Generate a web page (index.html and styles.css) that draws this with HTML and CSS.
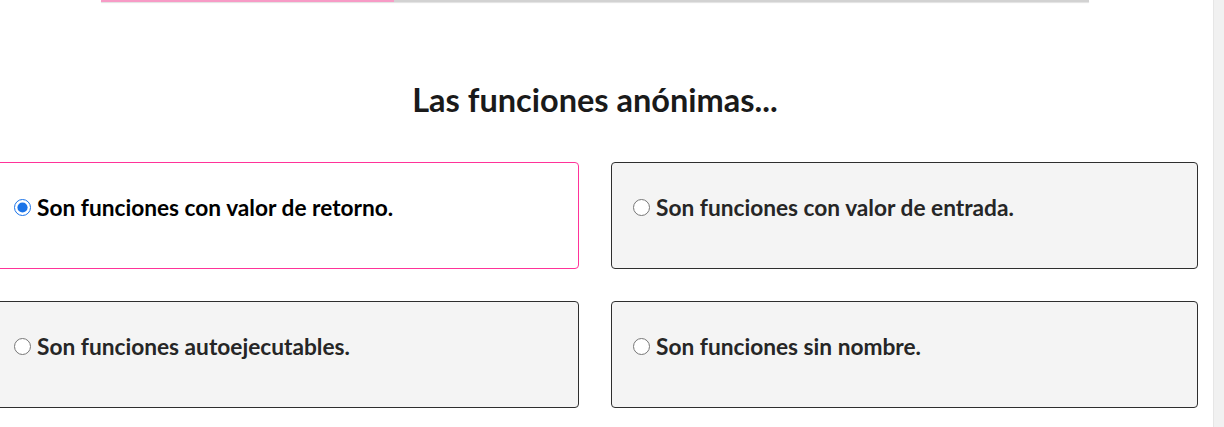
FILE: index.html
```html
<!DOCTYPE html>
<html lang="es">
<head>
<meta charset="utf-8">
<title>Quiz</title>
<link rel="stylesheet" href="styles.css">
</head>
<body>
<div class="page">
  <main class="main">
    <div class="container">
      <div class="progress"><div class="progress-fill" style="width: 29.7%"></div></div>
      <h1 class="title">Las funciones anónimas...</h1>
      <form class="options">
        <label class="option selected"><input type="radio" name="q" checked><span>Son funciones con valor de retorno.</span></label>
        <label class="option"><input type="radio" name="q"><span>Son funciones con valor de entrada.</span></label>
        <label class="option"><input type="radio" name="q"><span>Son funciones autoejecutables.</span></label>
        <label class="option"><input type="radio" name="q"><span>Son funciones sin nombre.</span></label>
      </form>
    </div>
  </main>
  <div class="scrollbar"></div>
</div>
</body>
</html>
```
FILE: styles.css
```css
html, body {
  margin: 0;
  padding: 0;
  background: #fff;
  height: 100%;
  overflow: hidden;
}
body {
  font-family: Lato, "Open Sans", sans-serif;
  color: #222;
}
.page {
  display: flex;
  height: 427px;
}
.main {
  flex: 1;
  overflow: hidden;
}
.scrollbar {
  width: 10px;
  background: #f1f1f1;
  border-left: 1px solid #e6e6e6;
}
.container {
  width: 1206px;
  margin-left: -8px;
}
.progress {
  width: 988px;
  height: 2px;
  margin: 0 auto;
  background: #d2d2d2;
  box-shadow: 0 1px 1px rgba(0,0,0,0.12);
}
.progress-fill {
  height: 100%;
  background: #f79bc6;
}
.title {
  margin: 78px 0 0;
  text-align: center;
  font-size: 32.5px;
  line-height: 39px;
  font-weight: 700;
  color: #1a1a1a;
}
.options {
  margin-top: 43px;
  display: grid;
  grid-template-columns: 1fr 1fr;
  column-gap: 32px;
  row-gap: 32px;
}
.option {
  display: flex;
  align-items: center;
  padding: 31px 21px 47px;
  background: #f4f4f4;
  border: 1px solid #2e2e2e;
  border-radius: 4px;
  font-size: 22.7px;
  line-height: 27px;
  font-weight: 700;
  color: #262626;
  cursor: pointer;
}
.option.selected {
  background: #fff;
  border-color: #ff3399;
  color: #000;
}
.option input {
  width: 17px;
  height: 17px;
  margin: 0 6px 0 0;
  accent-color: #1a73e8;
}
```
